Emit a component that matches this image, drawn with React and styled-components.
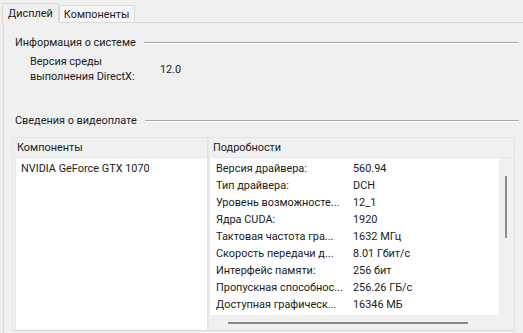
import React from "react";
import styled, { createGlobalStyle } from "styled-components";

const GlobalStyle = createGlobalStyle`
  html, body {
    margin: 0;
    padding: 0;
    background: #f0f0f0;
  }
  body {
    font-family: Roboto, "Noto Sans", sans-serif;
    font-size: 10.9px;
    color: #1b1b1b;
    overflow: hidden;
  }
`;

const Window = styled.div`
  width: 523px;
  height: 333px;
  overflow: hidden;
  background: #f0f0f0;
`;

const TabBar = styled.div`
  display: flex;
  align-items: flex-end;
  height: 22px;
  padding-left: 2px;
`;

const Tab = styled.div`
  height: ${(p) => (p.active ? "20px" : "17px")};
  padding: 0 ${(p) => (p.active ? "5px" : "4px")};
  display: flex;
  align-items: center;
  border: 1px solid #d9d9d9;
  border-bottom: ${(p) => (p.active ? "1px solid #f0f0f0" : "none")};
  background: ${(p) => (p.active ? "#f0f0f0" : "#f6f6f6")};
  margin-bottom: ${(p) => (p.active ? "-1px" : "0")};
  position: relative;
  z-index: ${(p) => (p.active ? 1 : 0)};
  box-sizing: border-box;
`;

const Panel = styled.div`
  margin-left: 3px;
  width: 560px;
  height: 320px;
  border: 1px solid #dadada;
  box-sizing: border-box;
  padding: 12px 0 0 8px;
`;

const Legend = styled.div`
  display: flex;
  align-items: center;
  gap: 8px;
  width: 504px;
  height: 15px;
  line-height: 15px;
  padding-left: 3px;
  &::after {
    content: "";
    flex: 1;
    height: 1px;
    background: #a8a8a8;
    box-shadow: 0 1px 0 #ffffff;
  }
`;

const InfoRow = styled.div`
  display: flex;
  align-items: center;
  margin-top: 4px;
  padding-left: 18px;
`;

const InfoLabel = styled.div`
  width: 130px;
  line-height: 15px;
`;

const Spacer = styled.div`
  height: 29px;
`;

const Lists = styled.div`
  display: flex;
  margin-top: 9px;
`;

const ListBox = styled.div`
  width: ${(p) => p.w}px;
  height: 194px;
  display: flex;
  flex-direction: column;
  border-top: 1px solid #e3e3e3;
  border-left: 1px solid #e8e8e8;
  box-sizing: border-box;
`;

const Header = styled.div`
  height: 19px;
  flex: none;
  display: flex;
  align-items: center;
  padding-left: 4px;
  background: #f0f0f0;
  border-bottom: 1px solid #e6e6e6;
  border-right: 1px solid #e3e3e3;
`;

const Body = styled.div`
  flex: 1;
  display: flex;
  padding: 0 0 0 ${(p) => p.pad}px;
  border-right: 1px solid #e3e3e3;
  border-bottom: 1px solid #d6d6d6;
`;

const White = styled.div`
  flex: 1;
  background: #ffffff;
  padding: 2px 0 0 ${(p) => p.indent}px;
  border-left: 1px solid #e9e9e9;
  display: flex;
  flex-direction: column;
  overflow: hidden;
`;

const Item = styled.div`
  height: 17px;
  line-height: 17px;
`;

const DetailArea = styled.div`
  flex: 1;
  display: flex;
  flex-direction: column;
  border-right: 1px solid #e3e3e3;
  border-bottom: 1px solid #d6d6d6;
`;

const DetailMain = styled.div`
  flex: 1;
  display: flex;
`;

const DetailRow = styled.div`
  display: flex;
  height: 17px;
  line-height: 17px;
  flex: none;
`;

const DetailLabel = styled.div`
  width: 137px;
  white-space: nowrap;
`;

const VScroll = styled.div`
  width: 15px;
  position: relative;
  &::after {
    content: "";
    position: absolute;
    left: 6px;
    top: 18px;
    width: 2px;
    height: 62px;
    background: #8a8a8a;
  }
`;

const HScroll = styled.div`
  height: 15px;
  flex: none;
  position: relative;
  margin-right: 15px;
  &::after {
    content: "";
    position: absolute;
    left: 19px;
    top: 7px;
    width: 240px;
    height: 2px;
    background: #8a8a8a;
  }
`;

const details = [
  ["Версия драйвера:", "560.94"],
  ["Тип драйвера:", "DCH"],
  ["Уровень возможносте...", "12_1"],
  ["Ядра CUDA:", "1920"],
  ["Тактовая частота гра...", "1632 МГц"],
  ["Скорость передачи д...", "8.01 Гбит/с"],
  ["Интерфейс памяти:", "256 бит"],
  ["Пропускная способнос...", "256.26 ГБ/с"],
  ["Доступная графическ...", "16346 МБ"],
];

export default function App() {
  return (
    <Window>
      <GlobalStyle />
      <TabBar>
        <Tab active>Дисплей</Tab>
        <Tab>Компоненты</Tab>
      </TabBar>
      <Panel>
        <Legend>Информация о системе</Legend>
        <InfoRow>
          <InfoLabel>
            Версия среды
            <br />
            выполнения DirectX:
          </InfoLabel>
          <div>12.0</div>
        </InfoRow>
        <Spacer />
        <Legend>Сведения о видеоплате</Legend>
        <Lists>
          <ListBox w={196}>
            <Header>Компоненты</Header>
            <Body pad={2}>
              <White indent={5}>
                <Item>NVIDIA GeForce GTX 1070</Item>
              </White>
            </Body>
          </ListBox>
          <ListBox w={307}>
            <Header>Подробности</Header>
            <DetailArea>
              <DetailMain>
                <White indent={6}>
                  {details.map(([k, v]) => (
                    <DetailRow key={k}>
                      <DetailLabel>{k}</DetailLabel>
                      <div>{v}</div>
                    </DetailRow>
                  ))}
                </White>
                <VScroll />
              </DetailMain>
              <HScroll />
            </DetailArea>
          </ListBox>
        </Lists>
      </Panel>
    </Window>
  );
}
